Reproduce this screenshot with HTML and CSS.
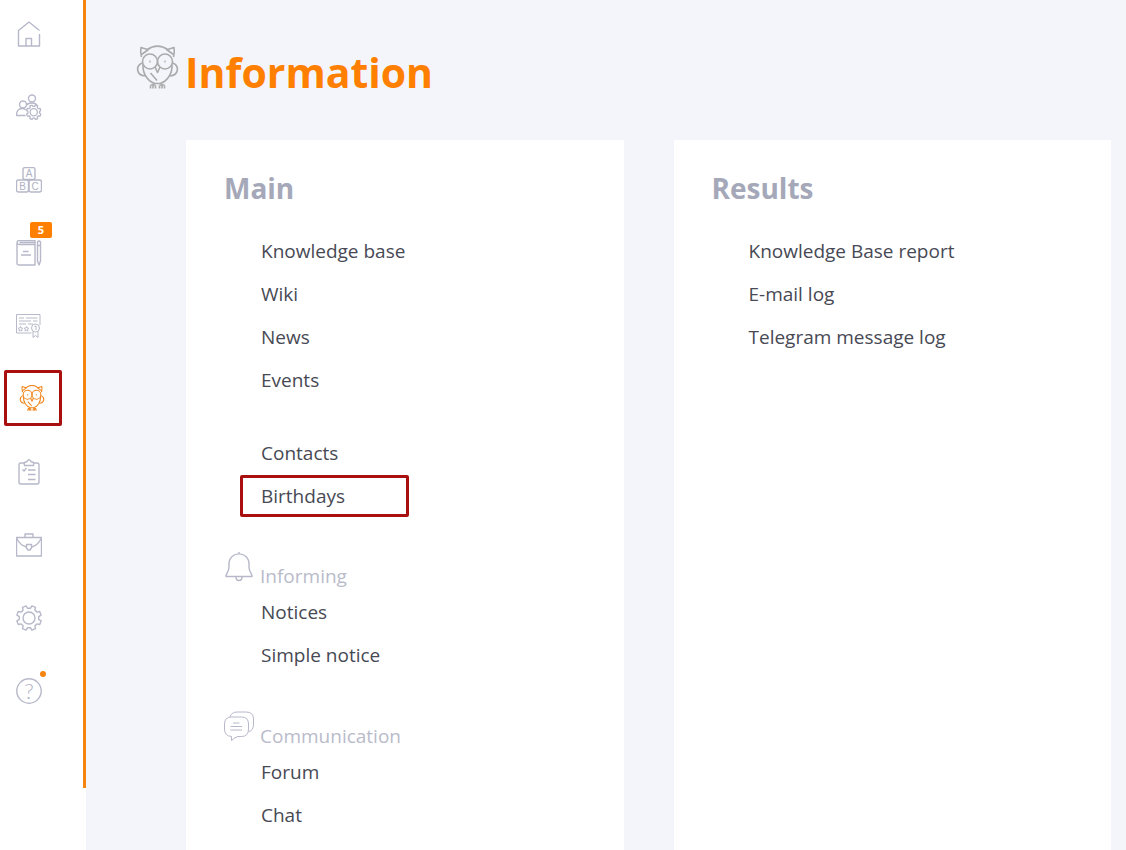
FILE: index.html
```
<!DOCTYPE html>
<html lang="en">
<head>
    <meta charset="UTF-8">
    <meta name="viewport" content="width=device-width, initial-scale=1.0">
    <title>Information</title>
    <link rel="stylesheet" href="styles.css">
</head>
<body>

    <svg class="sprite" aria-hidden="true">
        <symbol id="owl" viewBox="0 0 42 44">
            <path d="M5 12 C4 8 4 5 4.500 2.500 L11 4.500 C17 0 25 0 31 4.500 L37.500 2.500 C38 5 38 8 37 12"/>
            <path d="M5 9.500 L12 4.500 M37 9.500 L30 4.500"/>
            <circle cx="13.500" cy="16.500" r="7.500"/>
            <circle cx="28.500" cy="16.500" r="7.500"/>
            <circle cx="13.500" cy="16.500" r="0.300"/>
            <circle cx="28.500" cy="16.500" r="0.300"/>
            <path d="M18.500 22 L21 27.500 L23.500 22"/>
            <path d="M6.500 20 C6 29 12 37 18.500 38.500 H23.500 C30 37 36 29 35.500 20"/>
            <path d="M5.500 18 C-1 21 -0.500 30 8.500 31 M36.500 18 C43 21 42.500 30 33.500 31"/>
            <path d="M14 28 L20.500 35.500"/>
            <path d="M14 43.500 V40.500 M16.500 39 V43.500 M19 40.500 V43.500 M23 43.500 V40.500 M25.500 39 V43.500 M28 40.500 V43.500 M14 40 H19 M23 40 H28"/>
        </symbol>
        <symbol id="gear" viewBox="0 0 26 26">
            <path d="M14.400 3.300 L15.900 0.900 L19.500 2.300 L18.900 5.200 L20.800 7.100 L23.700 6.500 L25.100 10.100 L22.700 11.600 V14.400 L25.100 15.900 L23.700 19.500 L20.800 18.900 L18.900 20.800 L19.500 23.700 L15.900 25.100 L14.400 22.700 H11.600 L10.100 25.100 L6.500 23.700 L7.100 20.800 L5.200 18.900 L2.300 19.500 L0.900 15.900 L3.300 14.400 V11.600 L0.900 10.100 L2.300 6.500 L5.200 7.100 L7.100 5.200 L6.500 2.300 L10.100 0.900 L11.600 3.300 Z"/>
            <circle cx="13" cy="13" r="6"/>
        </symbol>
    </svg>

    <div class="layout">

        <!-- Side menu -->
        <aside class="sidebar">
            <nav class="side-nav">
                <a href="#" title="Home">
                    <svg class="icon" viewBox="0 0 26 26"><path d="M23.500 9.500 L13 1 L2.500 9.500 V25 H23.500 V13 M10 25 V17.500 H15.500 V25"/></svg>
                </a>
                <a href="#" title="Users">
                    <svg class="icon" viewBox="0 0 26 26">
                        <circle cx="16" cy="4.500" r="3.500"/>
                        <circle cx="7" cy="10.500" r="3.500"/>
                        <path d="M9.500 21.500 H0.500 C0.500 17 3 14.500 6 14.500 C8 14.500 9 15 10 16 M10.500 11 C11.500 9.500 13 9 16 9 C19 9 20.500 10 21.500 12"/>
                        <use class="small-gear" href="#gear" x="10" y="10.500" width="15.500" height="15.500"/>
                    </svg>
                </a>
                <a href="#" title="Catalogs">
                    <svg class="icon" viewBox="0 0 26 26">
                        <rect x="7" y="0.500" width="12" height="12" rx="2"/>
                        <rect x="0.500" y="13" width="12" height="12" rx="2"/>
                        <rect x="13" y="13" width="12.500" height="12" rx="2"/>
                        <text x="13" y="10">A</text>
                        <text x="6.500" y="22.500">B</text>
                        <text x="19" y="22.500">C</text>
                    </svg>
                </a>
                <a href="#" title="Learning">
                    <svg class="icon" viewBox="0 0 26 26">
                        <path d="M19 4.500 H3 C0.500 4.500 0.500 0.500 3 0.500 H19 V25 H3 Q1 25 1 23 V2.500 M3.500 2.500 H19"/>
                        <path d="M7 11.500 H12.500 M5 15 H15"/>
                        <path d="M21.500 2 Q23 0 24.500 2 V21 L23 25 L21.500 21 Z M21.500 5.500 H24.500"/>
                    </svg>
                    <span class="badge">5</span>
                </a>
                <a href="#" title="Certificates">
                    <svg class="icon thin" viewBox="0 0 26 26">
                        <path d="M15.500 20 H0.500 V1.500 H24 V12 M3 5 H8 M10 5 H21.500 M3 8 H15 M17 8 H21.500 M3 11 H10 M12 11 H17"/>
                        <path d="M4.500 13.500 l.7 1.500 1.600.2-1.100 1.200.3 1.600-1.500-.8-1.500.8.3-1.600-1.100-1.200 1.600-.2z M10.500 13.500 l.7 1.500 1.600.2-1.100 1.200.3 1.600-1.500-.8-1.500.8.3-1.600-1.100-1.200 1.600-.2z"/>
                        <circle cx="19.500" cy="15" r="4"/>
                        <path d="M18.500 13.500 L20 13 V17 M17 18.500 V24.500 L19.500 22.500 L22 24.500 V18.500"/>
                    </svg>
                </a>
                <a href="#" title="Information" class="active">
                    <svg class="icon"><use href="#owl"/></svg>
                </a>
                <a href="#" title="Tasks">
                    <svg class="icon" viewBox="0 0 26 26">
                        <path d="M8 4 H5 Q3 4 3 6 V23 Q3 25 5 25 H21 Q23 25 23 23 V6 Q23 4 21 4 H18"/>
                        <path d="M8.500 6.500 Q7.500 3 10 3 Q11 3 11.300 2 Q13 -0.500 14.700 2 Q15 3 16 3 Q18.500 3 17.500 6.500 Z"/>
                        <path d="M6.500 10.500 L8 12 L10.500 9 M12 11 H19.500 M12 15.500 H19.500 M12 20.500 H19.500"/>
                    </svg>
                </a>
                <a href="#" title="Work">
                    <svg class="icon" viewBox="0 0 26 26">
                        <path d="M0.500 5.500 H25.500 V24 H0.500 Z M9 5 V2 H17 V5"/>
                        <path d="M0.500 6 C3 11 6 14 10.500 15 M15.500 15 C20 14 23 11 25.500 6"/>
                        <path d="M10.500 12.500 H15.500 V16 L14 18 H12 L10.500 16 Z"/>
                    </svg>
                </a>
                <a href="#" title="Settings">
                    <svg class="icon"><use href="#gear"/></svg>
                </a>
                <a href="#" title="Help">
                    <svg class="icon" viewBox="0 0 26 26">
                        <circle cx="13" cy="13" r="12.200"/>
                        <text class="question" x="13" y="21">?</text>
                    </svg>
                    <span class="new-dot"></span>
                </a>
            </nav>
        </aside>

        <!-- Content -->
        <main class="content">
            <header class="page-header">
                <svg class="page-icon"><use href="#owl"/></svg>
                <h1>Information</h1>
            </header>

            <div class="panels">
                <section class="panel">
                    <h2>Main</h2>
                    <ul class="menu">
                        <li><a href="#">Knowledge base</a></li>
                        <li><a href="#">Wiki</a></li>
                        <li><a href="#">News</a></li>
                        <li><a href="#">Events</a></li>
                    </ul>
                    <ul class="menu separated">
                        <li><a href="#">Contacts</a></li>
                        <li><a href="#" class="marked">Birthdays</a></li>
                    </ul>

                    <h3>
                        <svg class="group-icon" viewBox="0 0 30 32">
                            <path d="M15 1 V3 M2 25.500 H28 C28 22 25 21 25 16 V13 C25 -0.500 5 -0.500 5 13 V16 C5 21 2 22 2 25.500 Z M12 26 Q12 29.500 15 29.500 Q18 29.500 18 26"/>
                        </svg>
                        <span>Informing</span>
                    </h3>
                    <ul class="menu">
                        <li><a href="#">Notices</a></li>
                        <li><a href="#">Simple notice</a></li>
                    </ul>

                    <h3>
                        <svg class="group-icon thin" viewBox="0 0 30 32">
                            <path d="M7.500 25.500 Q0.500 25 0.500 18 V13 Q0.500 6 7.500 6 H17.500 Q24.500 6 24.500 13 V18 Q24.500 25.500 17.500 25.500 H14 Q11 26 7.500 29.500 Z"/>
                            <path d="M6 6 Q7.500 1 13 1 H22 Q29.500 1 29.500 8 V13 Q29.500 20 24.500 20.500"/>
                            <path d="M9 12 H15.500 M6.500 15.500 H18 M6.500 19 H18"/>
                        </svg>
                        <span>Communication</span>
                    </h3>
                    <ul class="menu">
                        <li><a href="#">Forum</a></li>
                        <li><a href="#">Chat</a></li>
                    </ul>
                </section>

                <section class="panel">
                    <h2>Results</h2>
                    <ul class="menu">
                        <li><a href="#">Knowledge Base report</a></li>
                        <li><a href="#">E-mail log</a></li>
                        <li><a href="#">Telegram message log</a></li>
                    </ul>
                </section>
            </div>
        </main>

    </div>

</body>
</html>
```
FILE: styles.css
```
* {
    box-sizing: border-box;
}

body {
    margin: 0;
    background-color: #f4f5fa;
    color: #474954;
    font-family: "Open Sans", "Noto Sans", sans-serif;
    font-size: 19px;
}

a {
    color: inherit;
    text-decoration: none;
}

.sprite {
    position: absolute;
    width: 0;
    height: 0;
}

.layout {
    display: flex;
    min-height: 100vh;
}

/* Side menu */
.sidebar {
    width: 86px;
    flex-shrink: 0;
    background-color: #fff;
}

.side-nav {
    display: flex;
    flex-direction: column;
    gap: 13px;
    padding: 4px 0 67px 4px;
    border-right: 3px solid #f58410;
}

.side-nav a {
    position: relative;
    display: flex;
    align-items: center;
    width: 58px;
    height: 60px;
    padding-left: 12px;
}

.side-nav a.active {
    height: 56px;
    margin: 1px 0 3px;
    border: 3px solid #aa0f0f;
    border-radius: 2px;
}

.icon,
.page-icon,
.group-icon {
    fill: none;
    stroke: #b7b8c9;
    stroke-width: 1.4;
    stroke-linejoin: round;
}

.icon {
    width: 26px;
    height: 26px;
}

.small-gear {
    stroke-width: 2.2;
}

.icon.thin,
.group-icon.thin {
    stroke-width: 1;
}

.icon text {
    fill: #b0b1c4;
    stroke: none;
    font-family: "Liberation Sans", sans-serif;
    font-size: 10px;
    text-anchor: middle;
}

.icon .question {
    font-family: Lato, sans-serif;
    font-size: 22px;
    font-weight: 300;
}

.active .icon {
    stroke: #f0851c;
    stroke-width: 1.8;
}

.badge {
    position: absolute;
    top: -1px;
    left: 26px;
    width: 22px;
    height: 16px;
    border-radius: 2px;
    background-color: #ff7f00;
    color: #fff;
    font-size: 11px;
    font-weight: bold;
    line-height: 16px;
    text-align: center;
}

.new-dot {
    position: absolute;
    top: 10px;
    left: 36px;
    width: 6px;
    height: 6px;
    border-radius: 50%;
    background-color: #f58410;
}

/* Content */
.content {
    display: flex;
    flex: 1;
    flex-direction: column;
    padding: 0 15px 0 50px;
}

.page-header {
    display: flex;
    align-items: center;
    gap: 6px;
    height: 140px;
    padding-bottom: 6px;
}

.page-header h1 {
    margin: 0;
    padding-top: 10px;
    color: #ff7f00;
    font-size: 41px;
    line-height: 60px;
}

.page-icon {
    width: 43px;
    height: 44px;
    stroke: #aaabad;
    stroke-width: 1.6;
}

.panels {
    display: grid;
    flex: 1;
    grid-template-columns: 1fr 1fr;
    gap: 50px;
    margin-left: 50px;
}

.panel {
    padding: 28px 38px 8px;
    background-color: #fff;
}

.panel h2 {
    margin: 0 0 22px;
    color: #a5a8b8;
    font-size: 28px;
    line-height: 40px;
}

.panel h3 {
    display: flex;
    align-items: flex-start;
    gap: 6px;
    height: 40px;
    margin: 34px 0 0;
    color: #b9bbca;
    font-size: 19px;
    font-weight: normal;
}

.panel h3 span {
    padding-top: 10px;
    line-height: 30px;
}

.group-icon {
    width: 30px;
    height: 32px;
}

.menu {
    margin: 0;
    padding: 0 0 0 16px;
    list-style: none;
}

.menu.separated {
    margin-top: 30px;
}

.menu a {
    display: block;
    width: fit-content;
    padding: 0 21px;
    line-height: 43px;
}

.menu a.marked {
    width: 169px;
    padding: 0 18px;
    border: 3px solid #aa0f0f;
    border-radius: 2px;
    line-height: 36px;
}
```
